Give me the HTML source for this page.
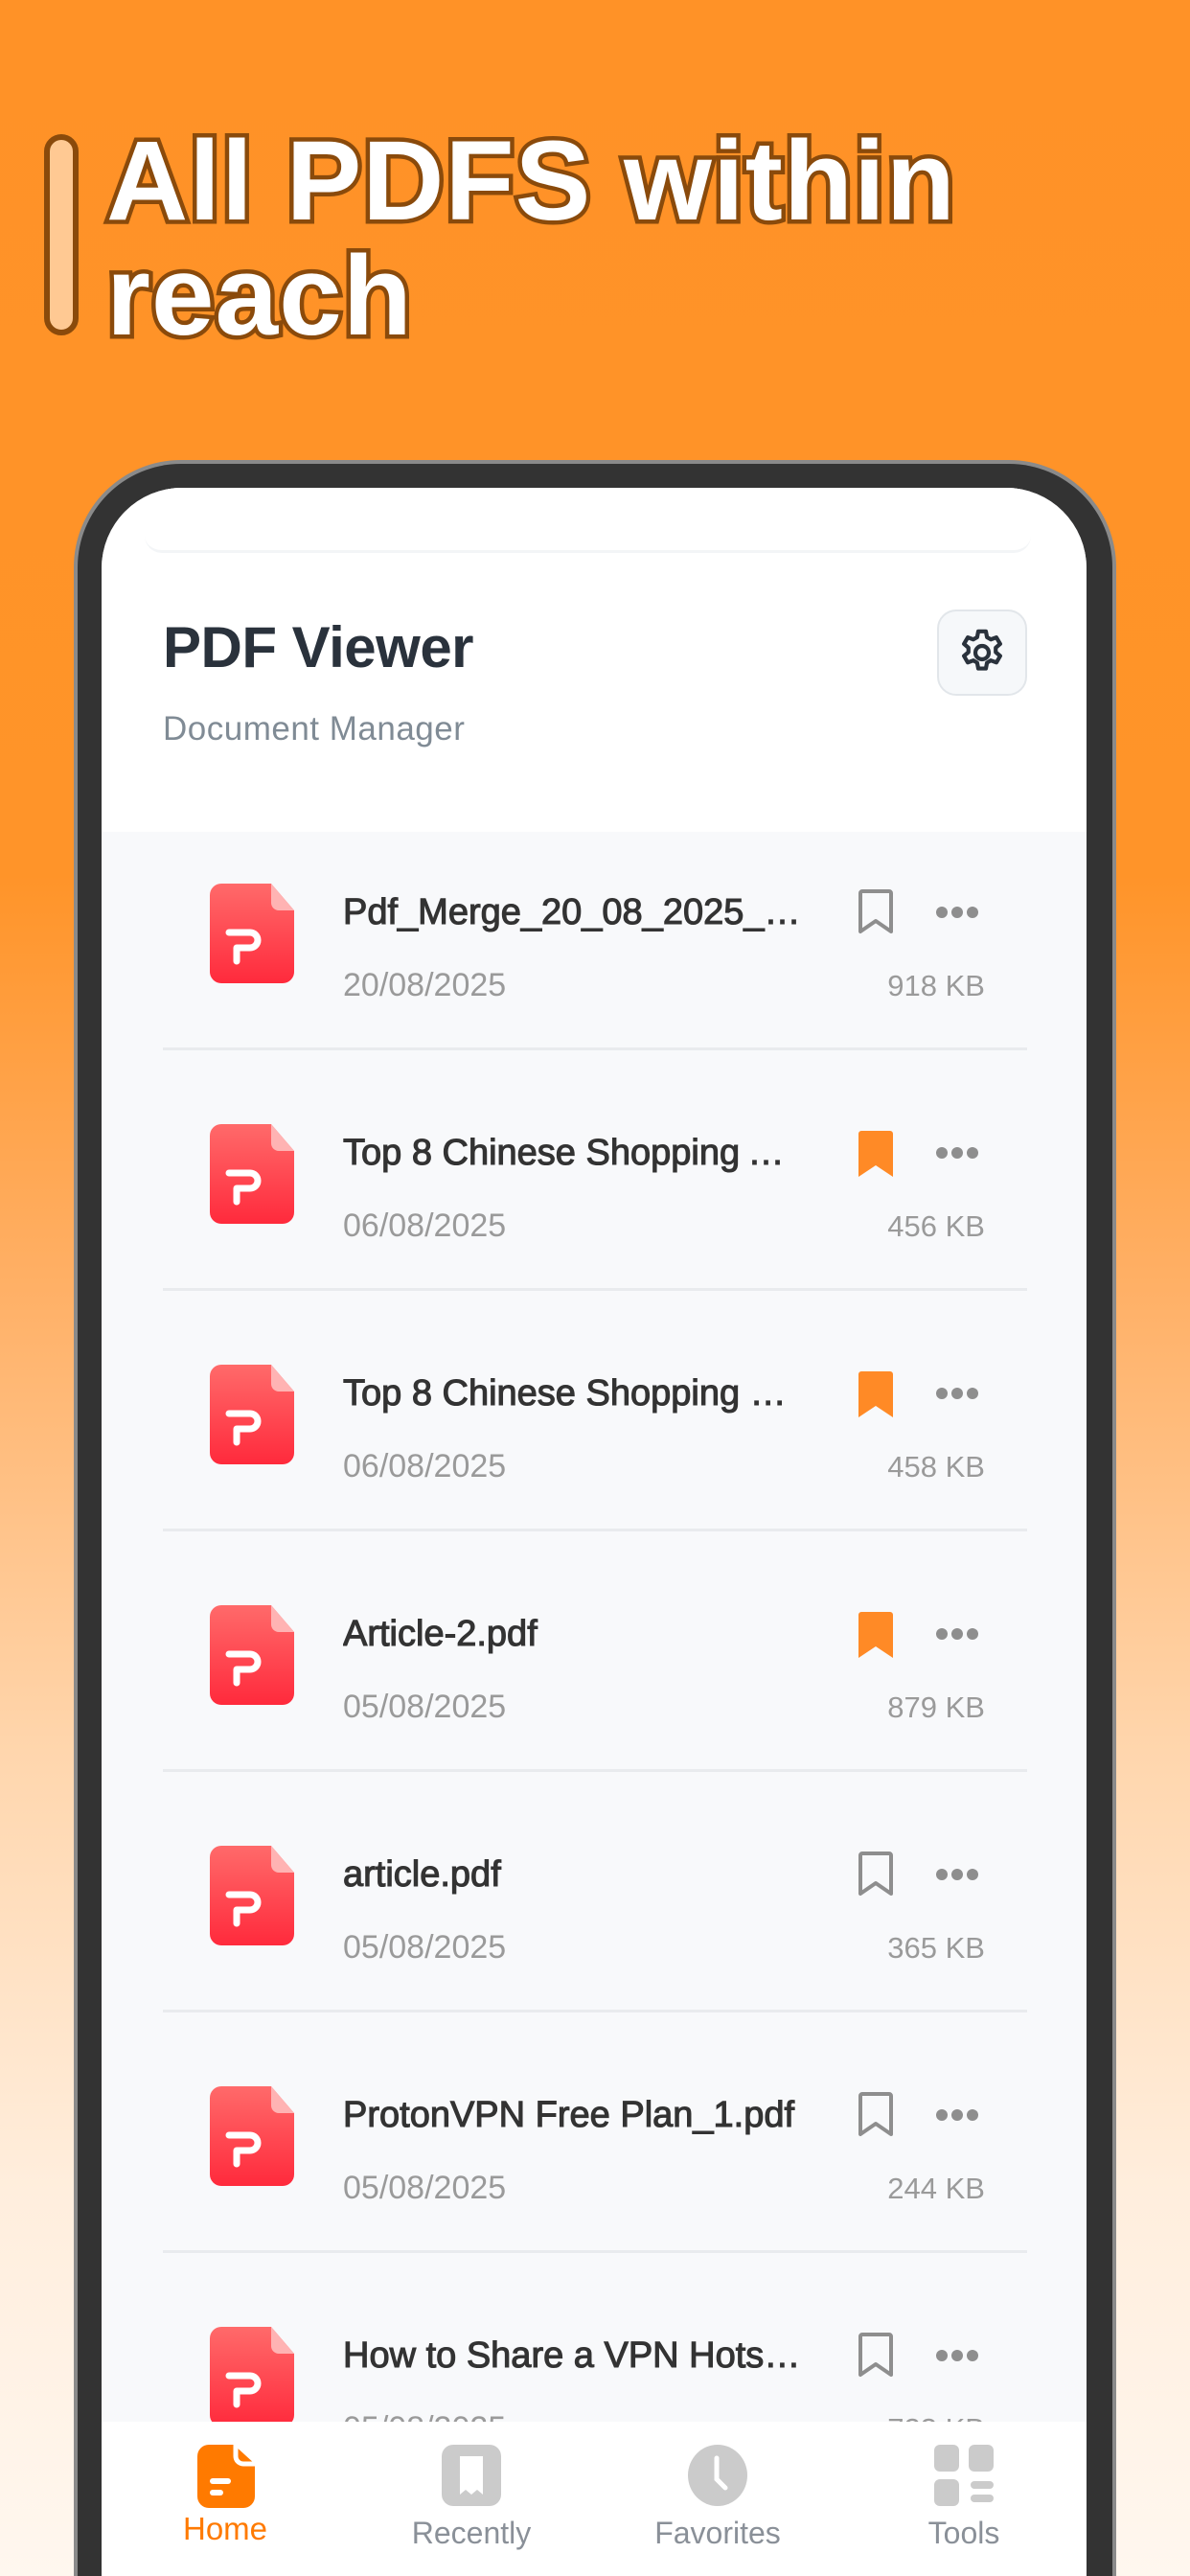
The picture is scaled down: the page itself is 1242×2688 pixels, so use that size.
<!DOCTYPE html>
<html><head><meta charset="utf-8">
<style>
*{margin:0;padding:0;box-sizing:border-box}
html,body{width:1242px;height:2688px;overflow:hidden;background:#fff7ef}
body{position:relative;font-family:"Liberation Sans",sans-serif}
.bg{position:absolute;left:0;top:0;width:1242px;height:2688px;background:linear-gradient(180deg,#ff9227 0%,#ff9429 34%,#ffb066 50%,#ffd6ad 68%,#ffeedd 85%,#fff7ef 100%)}
.abs{position:absolute}
.h1{left:111px;font-size:118px;font-weight:900;color:#fff;-webkit-text-stroke:9px #8a4a0b;paint-order:stroke fill;letter-spacing:1px;line-height:1}
.bar{left:46px;top:140px;width:36px;height:210px;border-radius:18px;background:#ffc993;border:6px solid #8a4a0b}
.phone{left:77px;top:480px;width:1088px;height:2208px;border-radius:112px 112px 0 0;background:#333;border:4px solid #8a8a8a;border-bottom:0}
.screen{left:106px;top:509px;width:1028px;height:2179px;border-radius:84px 84px 0 0;background:#f8f9fb;overflow:hidden}
.status{left:0;top:0;width:1028px;height:70px;background:#fff}
.sbox{left:45px;top:0;width:925px;height:68px;background:#fff;border-radius:0 0 18px 18px;border-bottom:3px solid #f3f5f7}
.header{left:0;top:70px;width:1028px;height:289px;background:#fff}
.title{left:64px;top:62px;font-size:60px;font-weight:700;color:#2a323c;letter-spacing:-0.5px}
.sub{left:64px;top:162px;font-size:35px;color:#808b95;letter-spacing:0.5px}
.gear{left:872px;top:57px;width:94px;height:90px;border-radius:20px;background:#f6f8fa;border:2px solid #e2e6ea;display:flex;align-items:center;justify-content:center}
.row{left:0;width:1028px;height:251px}
.row .ic{position:absolute;left:113px;top:77px}
.row .t{position:absolute;left:252px;top:86px;width:480px;font-size:38px;font-weight:400;-webkit-text-stroke:1.1px #333;color:#333;white-space:nowrap;overflow:hidden;text-overflow:ellipsis}
.row .d{position:absolute;left:252px;top:164px;font-size:34px;color:#9a9a9a}
.row .s{position:absolute;right:106px;top:166px;font-size:31px;color:#9a9a9a}
.row .bm{position:absolute;left:788px;top:83px}
.row .dots{position:absolute;left:870px;top:100px}
.row .dv{position:absolute;left:64px;right:62px;bottom:0;height:3px;background:#e9ebee}
.nav{left:0;top:2018px;width:1028px;height:161px;background:#fff}
.nl{position:absolute;top:2116px;font-size:32px;color:#8a9098;width:200px;text-align:center}
</style></head><body>
<div class="bg"></div>
<div class="abs bar"></div>
<div class="abs h1" style="top:130px">All PDFS within</div>
<div class="abs h1" style="top:250px">reach</div>

<div class="abs phone"></div>
<div class="abs screen">
  <div id="list"></div>
  <div class="abs status"></div>
  <div class="abs sbox"></div>
  <div class="abs header">
    <div class="abs title">PDF Viewer</div>
    <div class="abs sub">Document Manager</div>
    <div class="abs gear"><svg width="56" height="56" viewBox="0 0 24 24" fill="none" stroke="#2a323c" stroke-width="1.8" stroke-linejoin="round"><path d="M10.3 2.5h3.4l.5 2.6 1.7 1 2.5-.9 1.7 2.9-2 1.7v2l2 1.7-1.7 2.9-2.5-.9-1.7 1-.5 2.6h-3.4l-.5-2.6-1.7-1-2.5.9-1.7-2.9 2-1.7v-2l-2-1.7 1.7-2.9 2.5.9 1.7-1z"/><circle cx="12" cy="12" r="3"/></svg></div>
  </div>
  <div class="abs nav">
    <svg class="abs" style="left:100px;top:24px" width="60" height="66" viewBox="0 0 60 66"><path d="M12 0h26l22 20v34a12 12 0 0 1-12 12H12A12 12 0 0 1 0 54V12A12 12 0 0 1 12 0z" fill="#ff7a00"/><path d="M40 0v12a8 8 0 0 0 8 8h12" fill="none" stroke="#fff" stroke-width="5"/><rect x="13" y="35" width="22" height="6" rx="3" fill="#fff"/><rect x="13" y="47" width="14" height="6" rx="3" fill="#fff"/></svg>
    <svg class="abs" style="left:355px;top:24px" width="62" height="64" viewBox="0 0 62 64"><rect width="62" height="64" rx="12" fill="#cbcbcb"/><path d="M19 12h24v40l-6-5-6 5-6-5-6 5z" fill="#fff"/></svg>
    <svg class="abs" style="left:612px;top:24px" width="62" height="64" viewBox="0 0 62 64"><ellipse cx="31" cy="32" rx="31" ry="32" fill="#cbcbcb"/><path d="M30 14v22l9 9" fill="none" stroke="#fff" stroke-width="5" stroke-linecap="round"/></svg>
    <svg class="abs" style="left:869px;top:24px" width="62" height="64" viewBox="0 0 62 64"><rect x="0" y="0" width="26" height="28" rx="6" fill="#cbcbcb"/><rect x="36" y="0" width="26" height="28" rx="6" fill="#cbcbcb"/><rect x="0" y="36" width="26" height="28" rx="6" fill="#cbcbcb"/><rect x="38" y="38" width="24" height="8" rx="4" fill="#cbcbcb"/><rect x="38" y="52" width="24" height="8" rx="4" fill="#cbcbcb"/></svg>
  </div>
  <div class="nl" style="left:29px;top:2111px;color:#ff7a00;font-size:33px">Home</div>
  <div class="nl" style="left:286px">Recently</div>
  <div class="nl" style="left:543px">Favorites</div>
  <div class="nl" style="left:800px">Tools</div>
</div>
<script>
var rows=[["Pdf_Merge_20_08_2025_123456.pdf","20/08/2025","918 KB",0],["Top 8 Chinese Shopping Apps.pdf","06/08/2025","456 KB",1],["Top 8 Chinese Shopping Sites.pdf","06/08/2025","458 KB",1],["Article-2.pdf","05/08/2025","879 KB",1],["article.pdf","05/08/2025","365 KB",0],["ProtonVPN Free Plan_1.pdf","05/08/2025","244 KB",0],["How to Share a VPN Hotspot.pdf","05/08/2025","723 KB",0]];
var ic='<svg class="ic" width="88" height="104" viewBox="0 0 88 104"><defs><linearGradient id="g" x1="0" y1="0" x2="0" y2="1"><stop offset="0" stop-color="#ff6a6a"/><stop offset="1" stop-color="#ff2a3c"/></linearGradient></defs><path d="M12 0h52l24 28v64a12 12 0 0 1-12 12H12A12 12 0 0 1 0 92V12A12 12 0 0 1 12 0z" fill="url(#g)"/><path d="M64 0v20a8 8 0 0 0 8 8h16z" fill="#ffb3b3"/><path d="M20 51h22a8 8 0 0 1 0 16H28v14" fill="none" stroke="#fff" stroke-width="7" stroke-linecap="round" stroke-linejoin="round"/></svg>';
var h='';
rows.forEach(function(r,i){
 var bm=r[3]?'<svg class="bm" width="40" height="50" viewBox="0 0 40 50"><path d="M2 4a3 3 0 0 1 3-3h30a3 3 0 0 1 3 3v45L20 37 2 49z" fill="#ff8a26"/></svg>':'<svg class="bm" width="40" height="50" viewBox="0 0 40 50"><path d="M4 4a2 2 0 0 1 2-2h28a2 2 0 0 1 2 2v40L20 33 4 44z" fill="none" stroke="#8e8e8e" stroke-width="4" stroke-linejoin="round"/></svg>';
 h+='<div class="abs row" style="top:'+(336+i*251)+'px">'+ic+'<div class="t">'+r[0]+'</div><div class="d">'+r[1]+'</div><div class="s">'+r[2]+'</div>'+bm+'<svg class="dots" width="46" height="14" viewBox="0 0 46 14"><circle cx="7" cy="7" r="6" fill="#8e8e8e"/><circle cx="23" cy="7" r="6" fill="#8e8e8e"/><circle cx="39" cy="7" r="6" fill="#8e8e8e"/></svg>'+(i<6?'<div class="dv"></div>':'')+'</div>';
});
document.getElementById('list').outerHTML=h;
</script>
</body></html>
